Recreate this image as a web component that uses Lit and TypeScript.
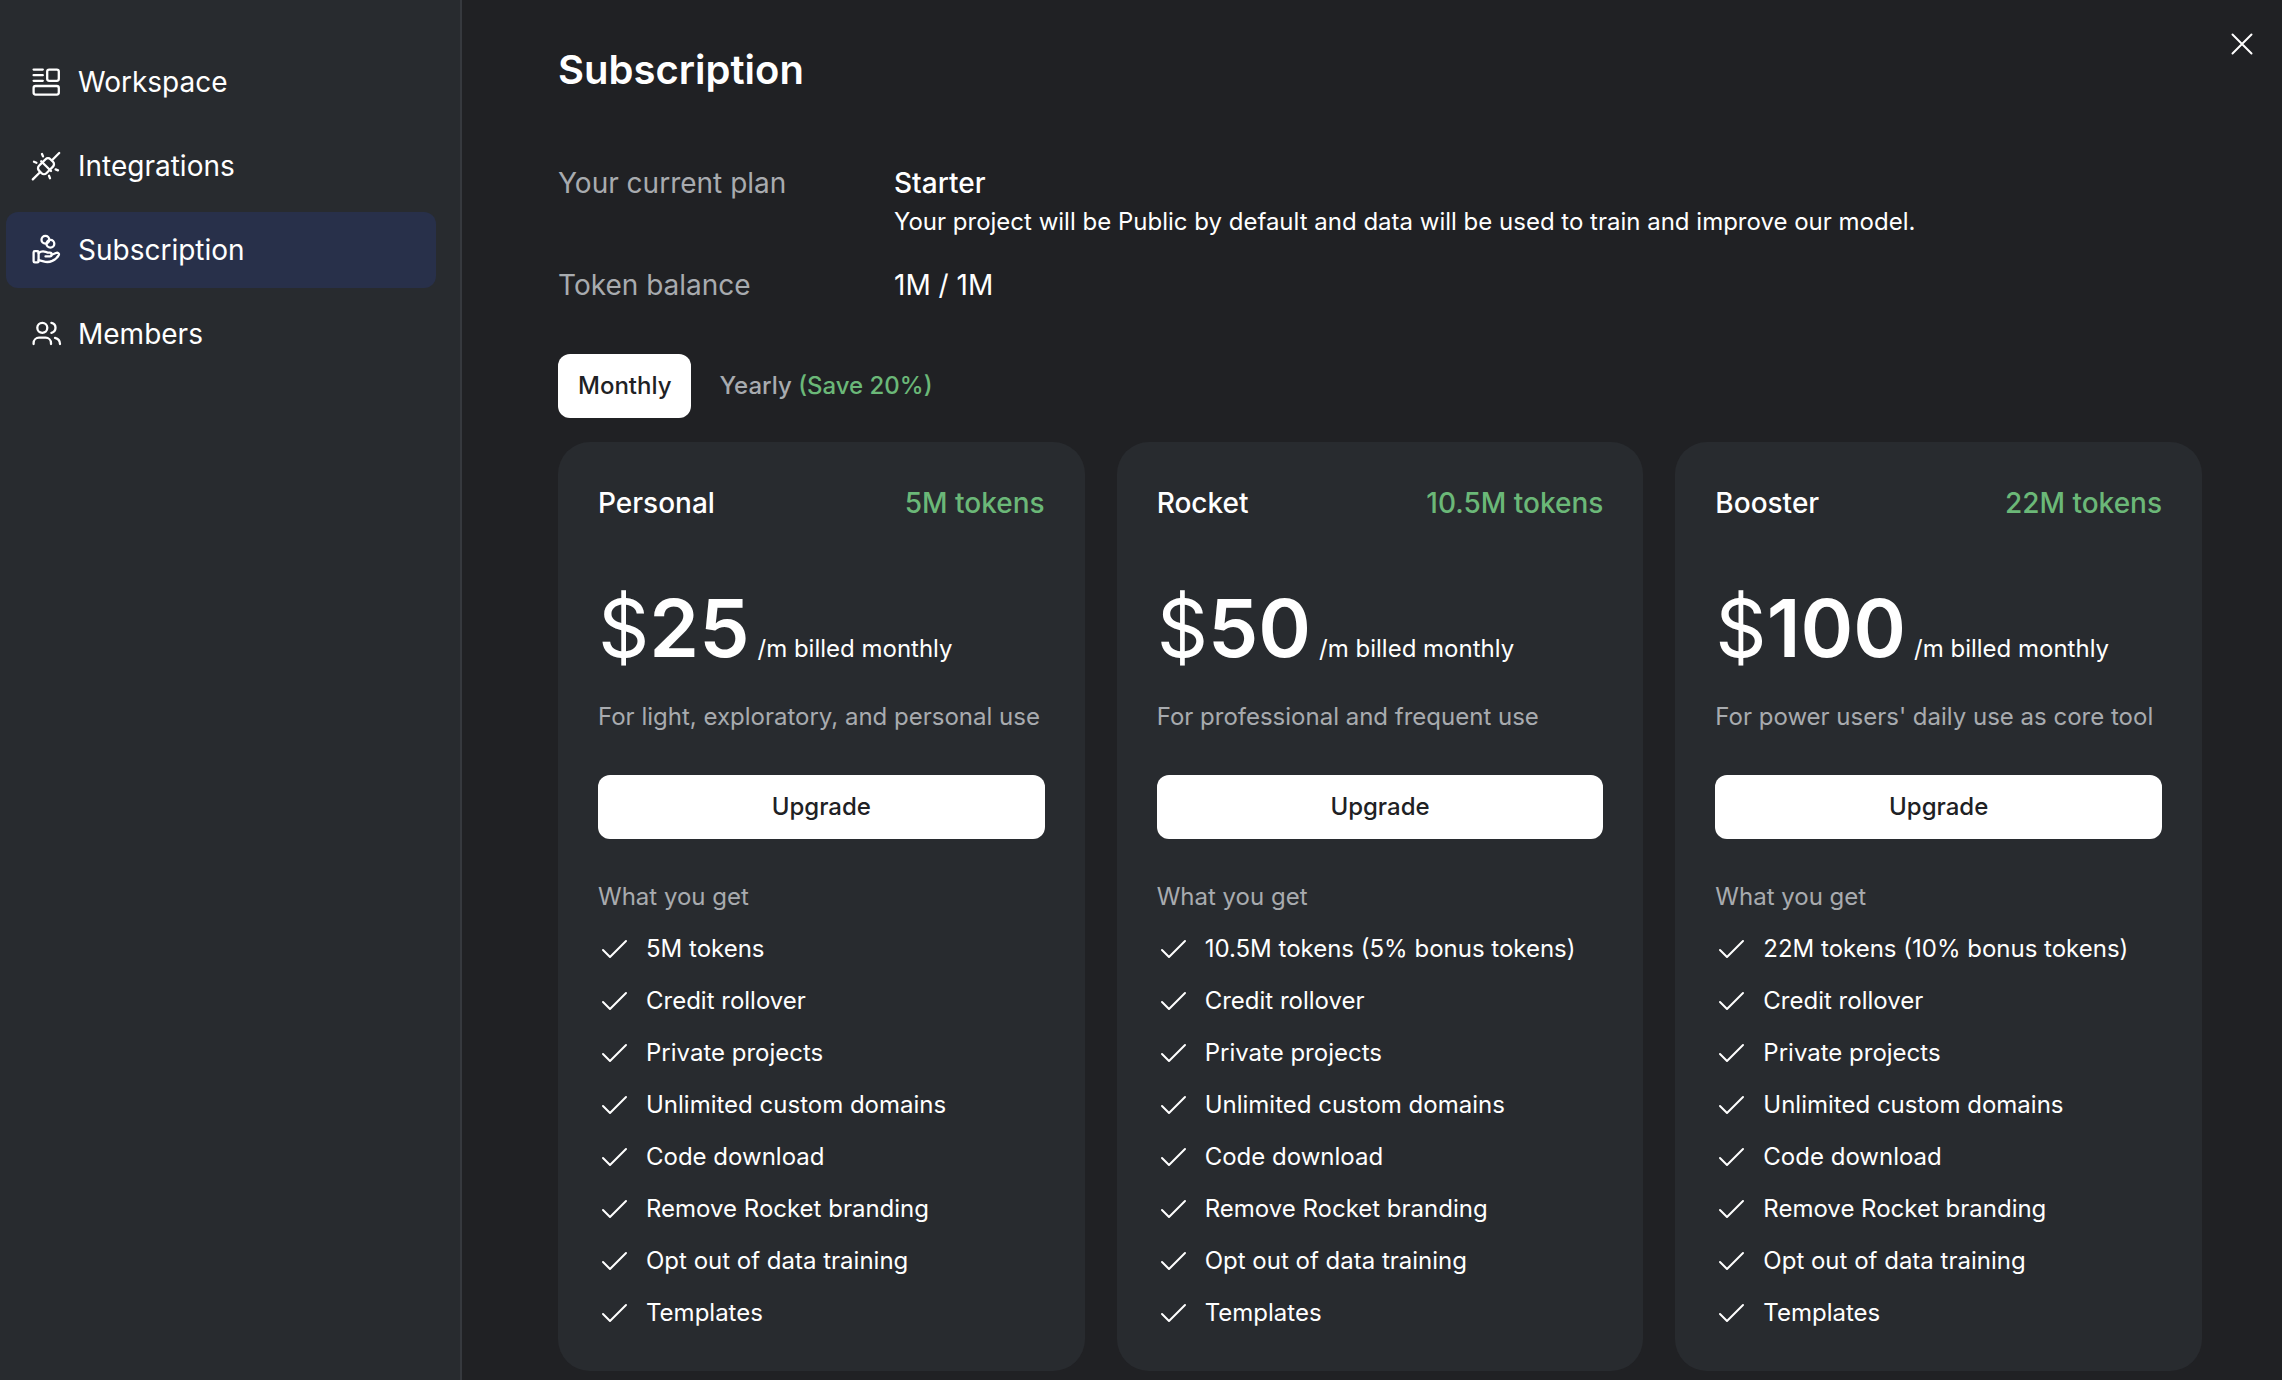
import { LitElement, html, css, svg, nothing, type TemplateResult } from "lit";
import { customElement, property, state } from "lit/decorators.js";

type IconName = "workspace" | "integrations" | "subscription" | "members" | "check" | "close";

const ICONS: Record<IconName, TemplateResult> = {
  workspace: svg`
    <path d="M3.6 3.6h9.2M3.6 9.2h9.2M3.6 14.8h9.2"/>
    <rect x="17.2" y="3.6" width="11.6" height="11.2" rx="2"/>
    <rect x="3.6" y="20" width="25.2" height="8.6" rx="2"/>`,
  integrations: svg`
    <path d="M29.2 3 22 10.2M10 22.2 2.8 29.4"/>
    <path d="M12.4 12.4 15.6 9.2a3.4 3.4 0 0 1 4.800 0L23 11.800a3.400 3.400 0 0 1 0 4.800L19.800 19.800"/>
    <path d="M12.400 12.400 9 15.800a3.400 3.400 0 0 0 0 4.800L11.600 23.200a3.400 3.400 0 0 0 4.800 0L19.800 19.800"/>
    <path d="m11.200 11.200 9.800 9.800M12 4l1 2.400M4 11.800l2.400 1M28 20.400l-2.400-1M20 28.200l-1-2.400"/>`,
  subscription: svg`
    <circle cx="15.400" cy="5.800" r="3.900"/>
    <circle cx="20.400" cy="9.800" r="3.900"/>
    <rect x="3.600" y="17.200" width="5" height="11.200" rx="1.200"/>
    <path d="M8.600 19c2-1.600 4.600-2 7-1.200l2 .8h2.200a1.900 1.900 0 0 1 0 3.800h-4.300"/>
    <path d="M21.700 20.800l4.300-1.800c1.700-.7 3.500.4 2.800 1.900-.8 1.600-4 4.700-6.600 6-3 1.400-6 1.300-8.700.5l-4.900-1.200"/>`,
  members: svg`
    <circle cx="12.300" cy="9.800" r="5"/>
    <path d="M3.600 26v-1a5.400 5.400 0 0 1 5.400-5.300h6.600a5.400 5.400 0 0 1 5.400 5.300v1"/>
    <path d="M21.400 4.800a5.100 5.100 0 0 1 0 10M25 19.800c3 .8 5 3 5 6.200"/>`,
  check: svg`<path d="M5 17 12 24 28 8"/>`,
  close: svg`<path d="M6.500 6.500 25.500 25.500M25.500 6.500 6.500 25.500"/>`,
};

@customElement("ui-icon")
export class UiIcon extends LitElement {
  @property() name: IconName = "check";

  static styles = css`
    :host {
      display: block;
      flex: none;
      width: 32px;
      height: 32px;
    }
    .glyph {
      display: block;
      width: 100%;
      height: 100%;
      fill: none;
      stroke: currentColor;
      stroke-width: var(--icon-stroke, 2);
      stroke-linecap: round;
      stroke-linejoin: round;
    }
  `;

  render() {
    return html`<svg class="glyph" viewBox="0 0 32 32" aria-hidden="true">${ICONS[this.name]}</svg>`;
  }
}

interface Plan {
  name: string;
  tokens: string;
  price: string;
  summary: string;
  features: string[];
}

const SHARED_FEATURES = [
  "Credit rollover",
  "Private projects",
  "Unlimited custom domains",
  "Code download",
  "Remove Rocket branding",
  "Opt out of data training",
  "Templates",
];

const PLANS: Plan[] = [
  {
    name: "Personal",
    tokens: "5M tokens",
    price: "25",
    summary: "For light, exploratory, and personal use",
    features: ["5M tokens", ...SHARED_FEATURES],
  },
  {
    name: "Rocket",
    tokens: "10.5M tokens",
    price: "50",
    summary: "For professional and frequent use",
    features: ["10.5M tokens (5% bonus tokens)", ...SHARED_FEATURES],
  },
  {
    name: "Booster",
    tokens: "22M tokens",
    price: "100",
    summary: "For power users' daily use as core tool",
    features: ["22M tokens (10% bonus tokens)", ...SHARED_FEATURES],
  },
];

@customElement("plan-card")
export class PlanCard extends LitElement {
  @property({ attribute: false }) plan!: Plan;

  static styles = css`
    :host {
      display: block;
      min-width: 0;
    }
    .card {
      display: flex;
      flex-direction: column;
      gap: 40px;
      padding: 40px;
      border-radius: 32px;
      background: #282b2f;
      color: #fff;
      font-size: 24px;
      line-height: 36px;
    }
    .top {
      display: flex;
      justify-content: space-between;
      font-size: 28px;
      line-height: 42px;
      font-weight: 500;
    }
    .name {
      margin: 0;
      font: inherit;
    }
    .tokens {
      color: #6bb878;
    }
    .offer {
      display: flex;
      flex-direction: column;
      gap: 8px;
    }
    .price {
      display: flex;
      align-items: baseline;
      height: 127px;
      margin: 0;
    }
    .amount {
      font-size: 80px;
      line-height: 127px;
      font-weight: 600;
    }
    .currency {
      font-weight: 400;
    }
    .period {
      margin-left: 8px;
    }
    .summary,
    .lead {
      margin: 0;
      color: #a8abaf;
    }
    .upgrade {
      height: 64px;
      border: 0;
      border-radius: 12px;
      background: #fff;
      color: #202124;
      font: inherit;
      font-weight: 500;
      cursor: pointer;
    }
    .benefits,
    .features {
      display: flex;
      flex-direction: column;
      gap: 16px;
    }
    .features {
      margin: 0;
      padding: 0;
      list-style: none;
    }
    .feature {
      display: flex;
      align-items: center;
      gap: 16px;
    }
  `;

  render() {
    const { name, tokens, price, summary, features } = this.plan;
    return html`
      <article class="card">
        <header class="top">
          <h2 class="name">${name}</h2>
          <span class="tokens">${tokens}</span>
        </header>
        <div class="offer">
          <p class="price">
            <span class="amount"><span class="currency">$</span>${price}</span>
            <span class="period">/m billed monthly</span>
          </p>
          <p class="summary">${summary}</p>
        </div>
        <button class="upgrade" type="button">Upgrade</button>
        <div class="benefits">
          <p class="lead">What you get</p>
          <ul class="features">
            ${features.map(
              (text) => html`<li class="feature"><ui-icon name="check"></ui-icon><span>${text}</span></li>`,
            )}
          </ul>
        </div>
      </article>
    `;
  }
}

const NAV: { icon: IconName; label: string }[] = [
  { icon: "workspace", label: "Workspace" },
  { icon: "integrations", label: "Integrations" },
  { icon: "subscription", label: "Subscription" },
  { icon: "members", label: "Members" },
];

@customElement("app-root")
export class AppRoot extends LitElement {
  @state() private page: IconName = "subscription";
  @state() private billing: "monthly" | "yearly" = "monthly";

  static styles = css`
    :host {
      display: flex;
      min-height: 100vh;
      background: #202124;
      color: #fff;
      font-family: Inter, "Liberation Sans", sans-serif;
      font-size: 24px;
      line-height: 36px;
    }
    .sidebar {
      box-sizing: border-box;
      flex: none;
      width: 462px;
      padding: 44px 24px 44px 6px;
      border-right: 2px solid #36393e;
      background: #282b2f;
    }
    .nav {
      display: flex;
      flex-direction: column;
      gap: 8px;
      --icon-stroke: 2.3;
    }
    .link {
      display: flex;
      align-items: center;
      gap: 16px;
      height: 76px;
      padding: 0 24px;
      border-radius: 12px;
      color: inherit;
      font-size: 28px;
      line-height: 42px;
      text-decoration: none;
    }
    .link[aria-current] {
      background: #28304a;
    }
    .main {
      flex: 1;
      min-width: 0;
      padding: 40px 80px 8px 96px;
    }
    .header {
      display: flex;
      justify-content: space-between;
      align-items: flex-start;
    }
    .title {
      margin: 0;
      font-size: 40px;
      line-height: 60px;
      font-weight: 600;
    }
    .close {
      display: flex;
      margin: -12px -56px 0 0;
      padding: 0;
      border: 0;
      background: none;
      color: inherit;
      cursor: pointer;
    }
    .account {
      display: grid;
      grid-template-columns: 336px 1fr;
      row-gap: 24px;
      margin: 62px 0 48px;
      font-size: 28px;
      line-height: 42px;
    }
    .term {
      color: #a8abaf;
    }
    .value {
      margin: 0;
    }
    .plan {
      display: block;
      font-weight: 500;
    }
    .note {
      display: block;
      font-size: 24px;
      line-height: 36px;
    }
    .tabs {
      display: flex;
      gap: 8px;
      margin-bottom: 24px;
    }
    .tab {
      height: 64px;
      padding: 0 20px;
      border: 0;
      border-radius: 12px;
      background: none;
      color: #a8abaf;
      font: inherit;
      font-weight: 500;
      cursor: pointer;
    }
    .tab[aria-selected="true"] {
      background: #fff;
      color: #202124;
    }
    .save {
      color: #6bb878;
    }
    .plans {
      display: grid;
      grid-template-columns: repeat(3, 1fr);
      gap: 32px;
    }
  `;

  render() {
    return html`
      <aside class="sidebar">
        <nav class="nav" aria-label="Settings">
          ${NAV.map(
            ({ icon, label }) => html`
              <a
                class="link"
                href="#${icon}"
                aria-current=${icon === this.page ? "page" : nothing}
                @click=${() => (this.page = icon)}
                ><ui-icon name=${icon}></ui-icon><span>${label}</span></a
              >
            `,
          )}
        </nav>
      </aside>
      <main class="main">
        <header class="header">
          <h1 class="title">Subscription</h1>
          <button class="close" type="button" aria-label="Close"><ui-icon name="close"></ui-icon></button>
        </header>
        <dl class="account">
          <dt class="term">Your current plan</dt>
          <dd class="value">
            <span class="plan">Starter</span>
            <span class="note">Your project will be Public by default and data will be used to train and improve our model.</span>
          </dd>
          <dt class="term">Token balance</dt>
          <dd class="value">1M / 1M</dd>
        </dl>
        <div class="tabs" role="tablist">
          <button
            class="tab"
            type="button"
            role="tab"
            aria-selected=${this.billing === "monthly"}
            @click=${() => (this.billing = "monthly")}
          >
            Monthly
          </button>
          <button
            class="tab"
            type="button"
            role="tab"
            aria-selected=${this.billing === "yearly"}
            @click=${() => (this.billing = "yearly")}
          >
            Yearly <span class="save">(Save 20%)</span>
          </button>
        </div>
        <section class="plans">
          ${PLANS.map((plan) => html`<plan-card .plan=${plan}></plan-card>`)}
        </section>
      </main>
    `;
  }
}
